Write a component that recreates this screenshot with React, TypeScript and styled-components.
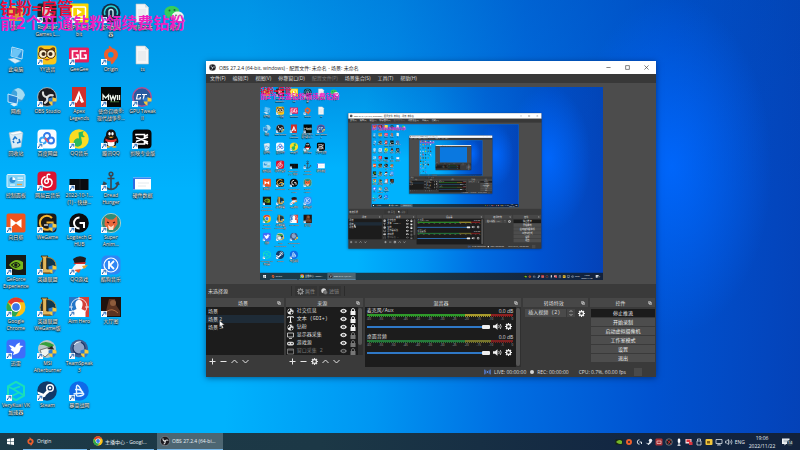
import React from "react";
import styled, { createGlobalStyle, css } from "styled-components";

const UI = '"Open Sans", "Noto Sans CJK SC", sans-serif';
const MONO = '"Liberation Mono", "Noto Sans CJK SC", monospace';
const PREVIEW_SCALE = 0.429;
const MAX_DEPTH = 3;

const GlobalStyle = createGlobalStyle`
  *, *::before, *::after { box-sizing: border-box; }
  body { margin: 0; overflow: hidden; background: #0078d7; font-family: ${UI}; }
  button, input, select { font: inherit; color: inherit; margin: 0; padding: 0; border: 0; background: none; }
  ul { list-style: none; margin: 0; padding: 0; }
  svg { display: block; flex: none; }
`;

/* ---------- desktop ---------- */

const Page = styled.div`
  display: flex;
  height: 100vh;
`;

const DesktopRoot = styled.div`
  flex: 1;
  display: flex;
  flex-direction: column;
  min-width: 0;
  overflow: hidden;
  background:
    radial-gradient(ellipse 100px 170px at 84% 37%, rgba(0, 104, 255, 0.9), rgba(0, 104, 255, 0) 100%),
    linear-gradient(180deg, rgba(0, 70, 170, 0.28), rgba(0, 70, 170, 0) 42%),
    linear-gradient(93deg, #00b2fd 0%, #00b2fd 30%, #0096f2 48%, #006ee2 64%, #0052d0 82%, #0442b8 100%);
`;

const Workspace = styled.main`
  position: relative;
  flex: 1;
  min-height: 0;
`;

const IconColumns = styled.div`
  display: grid;
  grid-template-columns: repeat(6, 1fr);
  width: 190px;
  padding-top: 1px;
`;

const Column = styled.div`
  display: grid;
  grid-auto-rows: 42px;
  align-content: start;
`;

const Shortcut = styled.button`
  display: flex;
  flex-direction: column;
  align-items: center;
  gap: 1px;
  padding-top: 2px;
  min-width: 0;
`;

const IconBox = styled.span`
  position: relative;
  display: block;
`;

const Arrow = styled.span`
  position: absolute;
  left: 0;
  bottom: 0;
`;

const Shield = styled.span`
  position: absolute;
  right: 0;
  bottom: 1px;
`;

const Caption = styled.span`
  color: #fff;
  font-size: 5px;
  line-height: 7px;
  text-align: center;
  white-space: pre;
  text-shadow: 0 0 1px #000, 0 1px 1px #000, 0 0 2px rgba(0, 0, 0, 0.7);
`;

const Banner = styled.div`
  position: absolute;
  left: 0;
  top: 0;
  padding-top: 1px;
  font-weight: 700;
  font-size: 16px;
  line-height: 15px;
  white-space: nowrap;
`;

const BannerLine = styled.div<{ $tone: string }>`
  color: ${(p) => p.$tone};
`;

const Pointer = styled.span`
  position: absolute;
  left: 219px;
  top: 320px;
`;

/* ---------- taskbar ---------- */

const Taskbar = styled.footer`
  display: flex;
  height: 17px;
  flex: none;
  align-items: stretch;
  background: linear-gradient(90deg, #1d3a47, #1c3846 40%, #122642 80%, #12223c);
  color: #e8eef2;
  font-size: 5px;
`;

const StartButton = styled.button`
  width: 20px;
  display: grid;
  place-items: center;
`;

const Tasks = styled.div`
  display: flex;
  gap: 3px;
  padding-left: 3px;
  flex: 1;
`;

const Task = styled.button<{ $active?: boolean }>`
  display: flex;
  align-items: center;
  gap: 2px;
  width: 64px;
  padding-left: 3px;
  border-bottom: 1px solid #76b9ed;
  white-space: nowrap;
  ${(p) => p.$active && css`width: 66px; background: #4d6672;`}
`;

const Tray = styled.div`
  display: flex;
  align-items: center;
  gap: 2px;
  padding-right: 7px;
`;

const TrayButton = styled.button`
  width: 8px;
  display: grid;
  place-items: center;
`;

const Clock = styled.time`
  width: 30px;
  text-align: center;
  line-height: 8px;
`;

const Notice = styled.button`
  position: relative;
  width: 11px;
  margin-left: 3px;
`;

const NoticeCount = styled.span`
  position: absolute;
  right: 0;
  bottom: 0;
  width: 6px;
  height: 6px;
  border-radius: 3px;
  background: #2b3a48;
  color: #fff;
  font-size: 4px;
  line-height: 6px;
  text-align: center;
`;

/* ---------- OBS window ---------- */

const Window = styled.section`
  position: absolute;
  inset: 61px 144px 56px 206px;
  display: flex;
  flex-direction: column;
  background: #3a3a3a;
  color: #dedede;
  font-size: 5px;
  line-height: 8px;
  box-shadow: 0 1px 6px rgba(0, 20, 60, 0.55);
`;

const TitleBar = styled.header`
  display: flex;
  align-items: center;
  height: 13px;
  flex: none;
  padding-left: 3px;
  gap: 3px;
  background: #fff;
  color: #222;
  white-space: nowrap;
`;

const Title = styled.h1`
  flex: 1;
  margin: 0;
  font-size: 5px;
  font-weight: 400;
`;

const ButtonGroup = styled.div`
  display: flex;
`;

const CaptionButton = styled.button`
  width: 19px;
  height: 13px;
  display: grid;
  place-items: center;
`;

const MenuBar = styled.nav`
  display: flex;
  height: 9px;
  flex: none;
  gap: 7px;
  padding-left: 4px;
  background: #383838;
`;

const MenuItem = styled.button`
  line-height: 9px;
  &:disabled { color: #7a7a7a; }
`;

const PreviewArea = styled.div`
  flex: 1;
  min-height: 0;
  display: grid;
  place-items: center;
  background: #4c4c4c;
`;

const PreviewFrame = styled.div`
  width: 343px;
  height: 193px;
  overflow: hidden;
  background: #0a78e0;
`;

const Stage = styled.div`
  display: flex;
  width: 800px;
  height: 450px;
  line-height: normal;
  transform: scale(${PREVIEW_SCALE});
  transform-origin: 0 0;
`;

const SourceBar = styled.div`
  display: flex;
  align-items: center;
  height: 14px;
  flex: none;
  padding-left: 2px;
`;

const SourceState = styled.span`
  width: 83px;
`;

const SourceTools = styled.div`
  display: flex;
  gap: 2px;
  padding: 0 3px;
  border: solid #2c2c2c;
  border-width: 0 1px;
`;

const ToolButton = styled.button`
  display: flex;
  align-items: center;
  gap: 1px;
  padding: 0 2px;
  height: 10px;
  background: #343434;
  &:disabled { color: #8a8a8a; }
`;

const Docks = styled.div`
  display: grid;
  grid-template-columns: 78fr 77fr 157fr 65fr 65fr;
  gap: 2px;
  height: 69px;
  flex: none;
  padding-right: 1px;
`;

const DockRoot = styled.section`
  display: flex;
  flex-direction: column;
  min-width: 0;
`;

const DockHead = styled.header`
  display: flex;
  align-items: center;
  height: 9px;
  flex: none;
  padding: 0 3px 0 3px;
  background: #474747;
`;

const DockTitle = styled.h2`
  flex: 1;
  margin: 0;
  font-size: 5px;
  font-weight: 400;
  text-align: center;
`;

const DockBody = styled.div<{ $dark?: boolean }>`
  flex: 1;
  min-height: 0;
  display: flex;
  background: ${(p) => (p.$dark ? "#1c1c1c" : "transparent")};
`;

const List = styled.ul`
  flex: 1;
  min-width: 0;
`;

const SceneRow = styled.li<{ $selected?: boolean }>`
  height: 8px;
  padding-left: 2px;
  background: ${(p) => (p.$selected ? "#1e2b37" : "transparent")};
`;

const SourceRow = styled.li<{ $dim?: boolean }>`
  display: flex;
  align-items: center;
  height: 8px;
  padding: 0 1px 0 1px;
  gap: 3px;
  white-space: nowrap;
  color: ${(p) => (p.$dim ? "#777" : "#dedede")};
`;

const SourceName = styled.span`
  flex: 1;
  font-family: ${MONO};
`;

const Toggle = styled.button<{ $dim?: boolean }>`
  width: 7px;
  color: ${(p) => (p.$dim ? "#777" : "#f2f2f2")};
`;

const ScrollTrack = styled.div`
  width: 5px;
  padding: 1px 0;
  background: #303030;
`;

const ScrollThumb = styled.div<{ $size: string }>`
  width: 4px;
  height: ${(p) => p.$size};
  border-radius: 2px;
  background: #555;
`;

const DockTools = styled.div`
  display: flex;
  align-items: center;
  height: 12px;
  flex: none;
  gap: 4px;
  padding-left: 3px;
`;

const DockTool = styled.button`
  width: 7px;
  display: grid;
  place-items: center;
`;

const Channels = styled.div`
  flex: 1;
  min-width: 0;
  display: grid;
  grid-template-columns: minmax(0, 1fr);
  grid-auto-rows: 26px;
  padding: 0 3px 0 2px;
`;

const Channel = styled.div`
  display: flex;
  flex-direction: column;
`;

const ChannelHead = styled.div`
  display: flex;
  justify-content: space-between;
  height: 7px;
  line-height: 8px;
`;

const ChannelName = styled.span`
  font-family: ${MONO};
`;

const MeterBar = styled.div<{ $loud?: boolean }>`
  height: 3px;
  background: ${(p) =>
    p.$loud
      ? "linear-gradient(90deg, #2f9a2a 67%, #a89a2c 67% 85%, #8e2020 85%)"
      : "linear-gradient(90deg, #257a3a 67%, #77752c 67% 85%, #7e2020 85%)"};
  border-bottom: 1px dotted #1c1c1c;
`;

const Scale = styled.div`
  display: flex;
  justify-content: space-between;
  height: 5px;
  line-height: 5px;
  color: #a8a8a8;
  font-size: 3px;
`;

const VolumeRow = styled.div`
  display: flex;
  align-items: center;
  gap: 3px;
  height: 9px;
  padding-right: 1px;
`;

const Volume = styled.input`
  appearance: none;
  flex: 1;
  min-width: 0;
  height: 5px;
  background: linear-gradient(#2f78c6, #2f78c6) center / 100% 2px no-repeat;
  &::-webkit-slider-thumb {
    appearance: none;
    width: 8px;
    height: 4px;
    border-radius: 1px;
    background: #efefef;
  }
`;

const IconButton = styled.button`
  display: grid;
  place-items: center;
  color: #f0f0f0;
`;

const TransitionRow = styled.div`
  flex: 1;
  display: flex;
  align-items: center;
  height: 8px;
  margin: 2px 3px 0 2px;
`;

const Transition = styled.select`
  appearance: none;
  flex: 1;
  min-width: 0;
  height: 8px;
  padding-left: 3px;
  background: #4a4a4a;
  font-family: ${MONO};
`;

const SelectArrows = styled.span`
  width: 9px;
  height: 8px;
  margin-right: 3px;
  display: grid;
  place-items: center;
  background: #464646;
  border-left: 1px solid #3a3a3a;
`;

const Controls = styled.div`
  flex: 1;
  display: grid;
  grid-auto-rows: 8px;
  gap: 1px;
  padding: 2px 0 0 1px;
  align-content: start;
`;

const ControlButton = styled.button<{ $on?: boolean }>`
  background: ${(p) => (p.$on ? "#1b1b1b" : "#4d4d4d")};
  color: #ececec;
  line-height: 8px;
`;

const StatusBar = styled.footer`
  display: flex;
  align-items: center;
  justify-content: flex-end;
  height: 10px;
  flex: none;
  padding-right: 14px;
  white-space: nowrap;
`;

const StatusItem = styled.span<{ $gap: number }>`
  display: flex;
  align-items: center;
  gap: 3px;
  margin-right: ${(p) => p.$gap}px;
`;

const Quality = styled.span`
  width: 8px;
  height: 8px;
  background: #4a4a4a;
`;

/* ---------- drawings ---------- */

const Obs = () => (
  <>
    <circle cx="10" cy="10" r="9.4" fill="#1c1b20" stroke="#c9c9c9" strokeWidth=".8" />
    <g fill="none" stroke="#ddd" strokeWidth="2.2" strokeLinecap="round">
      <path d="M6 5.4c-.4 2.6 1 4.4 3.8 4.6" />
      <path d="M15.7 8.4c-2.6-1-4.8.2-5.6 2.4" />
      <path d="M8 15.8c2.3-1.2 2.9-3.5 1.8-5.6" />
    </g>
  </>
);

const Chrome = () => (
  <>
    <circle cx="10" cy="10" r="9.5" fill="#fbc116" />
    <path d="M10 10 1.8 5.2A9.5 9.5 0 0 1 18.2 5.2H10Z" fill="#e33b2e" />
    <path d="M1.8 5.2A9.5 9.5 0 0 0 9.3 19.5L14 12.4 6 12Z" fill="#2da94f" />
    <circle cx="10" cy="10" r="4.9" fill="#fff" />
    <circle cx="10" cy="10" r="3.8" fill="#3b79e8" />
  </>
);

const Origin = () => (
  <path
    fillRule="evenodd"
    d="M8 .8C7.5 2 7.8 2.6 8.5 3.3 4.5 3.9 2.5 7 3.2 11c.6 3.3 3.3 5.4 6.6 5.3-.3 1-.1 2 .9 3.1 1.8-1.2 3-2.6 3.5-4.1 3-2.3 3.7-6.2 1.6-9.2-1.2-1.7-2.9-2.6-4.8-2.800C10.700 2 9.600 1.200 8 .8ZM9.800 7a2.800 2.800 0 1 1 0 5.600 2.800 2.800 0 0 1 0-5.600Z"
    fill="#ee5f2c"
  />
);

const Lol = () => (
  <>
    <circle cx="11" cy="10.5" r="8" fill="#12364a" stroke="#b88c3c" strokeWidth="1" />
    <path d="M4 1h7L9.700 3v11h5.800l2-2-1.200 6H4l1.600-2.200V3.200Z" fill="#e2b65c" stroke="#3f2b10" strokeWidth=".9" />
  </>
);

const Doc = () => (
  <>
    <path d="M4 1h9l3.5 3.5V19H4Z" fill="#f4f6f7" stroke="#bac3c8" strokeWidth=".6" />
    <path d="M13 1v3.500h3.500" fill="#d5dde1" />
    <path d="M6 7h8M6 9h8M6 11h8M6 13h8M6 15h8" stroke="#cdd3d6" strokeWidth=".5" />
  </>
);

const tile = (fill: string, r = 3) => <rect x=".5" y=".5" width="19" height="19" rx={r} fill={fill} />;

const GLYPHS: Record<string, React.ReactNode> = {
  obs: <Obs />,
  chrome: <Chrome />,
  origin: <Origin />,
  lol: <Lol />,
  doc: <Doc />,
  user: (
    <>
      <path d="M3 3h6l2 2h6v13H3Z" fill="#e9b84b" />
      <circle cx="10" cy="8" r="3" fill="#70502f" />
      <path d="M4 18c0-5 3-7 6-7s6 2 6 7Z" fill="#d9933a" />
    </>
  ),
  rockstar: <>{tile("#25262b", 2)}<path d="M5 4h6c4 0 4 5 1 6l4 1-3 2 1 4-3-2-3 2 1-4-3-1H5Z" fill="#d3d3d5" /></>,
  play: (
    <>
      {tile("#f8d500", 1)}
      <rect x="3.5" y="4" width="13" height="10" rx="1" fill="none" stroke="#fff" strokeWidth="1.5" />
      <path d="m8 6 5 3-5 3Z" fill="#fff" />
      <path d="M6 16.500h8" stroke="#fff" strokeWidth="1.2" />
    </>
  ),
  booster: (
    <>
      <circle cx="10" cy="10" r="9.5" fill="#152b45" />
      <path d="M4 12A6.500 6.500 0 1 1 16 12" fill="none" stroke="#2ad3d2" strokeWidth="1.5" />
      <path d="M8 14V8.500a2 2 0 0 1 4 0V14" fill="none" stroke="#c7eef3" strokeWidth="1.4" />
    </>
  ),
  wechat: (
    <>
      <path d="M8 3c-4.300 0-7.500 2.600-7.500 6 0 2 1.100 3.700 2.900 4.800L3 16l2.500-1.400c3.700.9 9.500-.9 9.900-5.600C15.500 5.500 12.300 3 8 3Z" fill="#35cc5a" />
      <path d="M13.800 8.500c3.400 0 6 2.200 6 4.800 0 1.500-.8 2.800-2 3.700l.3 1.700-1.900-1c-4.300 1-8.300-1-8.300-4.400 0-2.700 2.600-4.800 5.900-4.800Z" fill="#eef3f0" />
      <g fill="#22603b"><circle cx="5.5" cy="7.5" r="1" /><circle cx="10.5" cy="7" r="1" /><circle cx="12" cy="12.3" r=".8" /><circle cx="16" cy="12.3" r=".8" /></g>
    </>
  ),
  pc: (
    <>
      <path d="m6 2 11 3-1 9-11-3Z" fill="#2a91dc" stroke="#c8e9fb" strokeWidth=".9" />
      <path d="m6.500 3 9.500 2.600-5 7L5.800 11Z" fill="#6cc5f6" />
      <path d="m2 14 6-1 7 3-6 2.500Z" fill="#d8eef8" stroke="#6da9cc" strokeWidth=".5" />
    </>
  ),
  yy: (
    <>
      {tile("#fbc619", 4)}
      <path d="M2 3c2-2 4 0 5 1h6c1-1 3-3 5-1v6H2Z" fill="#6f4718" />
      <circle cx="6" cy="9" r="4.3" fill="#fff2cf" stroke="#4b2d10" />
      <circle cx="14" cy="9" r="4.3" fill="#fff2cf" stroke="#4b2d10" />
      <circle cx="6.5" cy="9" r="2" fill="#3f2a17" /><circle cx="13.5" cy="9" r="2" fill="#3f2a17" />
      <path d="M7 14q3 3 6 0Z" fill="#c45724" />
    </>
  ),
  geegee: (
    <>
      <rect x="0" y="2.5" width="20" height="15" rx="1.5" fill="#e7215c" />
      <path d="M9 6H3.500v7.500H9V10H6.800M17 6h-5.500v7.500H17V10h-2.200" fill="none" stroke="#fff" strokeWidth="1.7" />
    </>
  ),
  network: (
    <>
      <circle cx="12" cy="8" r="7" fill="#3fa3dc" />
      <path d="M8 3q4 1 3 5t5 5l3-5q-2-6-7-7Z" fill="#a5dcf2" />
      <path d="m2 7 10 3-1 7-9-2Z" fill="#2284d5" stroke="#d3effd" strokeWidth=".9" />
      <path d="m4 17 4-1 4 2-4 1.500Z" fill="#d8eef8" />
    </>
  ),
  apex: <><rect x="3" y="0" width="14" height="20" fill="#d02f2b" /><path d="M10 3.500 15 15l-2.500 1L10 12l-2.500 4L5 15Z" fill="#fff" /><path d="M10 8v5l1.500-1Z" fill="#d02f2b" /></>,
  mw: <><rect width="20" height="20" fill="#050807" /><path d="M2 13V8l2.700 3L7.500 8v5M9 8l1.300 5L12 9l1.500 4L15 8M16.500 8v5M18.500 8v5" fill="none" stroke="#eef5ec" strokeWidth="1.3" /><path d="M9 14.800h9" stroke="#65b14b" strokeWidth=".6" /></>,
  gpu: <><circle cx="10" cy="10" r="9.2" fill="#29599f" stroke="#b05291" strokeWidth="1.5" /><path d="M9 7.500H5.500L4.500 12H8l.5-2M10 7.500h5M12.300 7.500 11.200 12.500" fill="none" stroke="#fff" strokeWidth="1.2" /></>,
  bin: (
    <>
      <path d="M3 4 14 2l3 2-2 14-9 1.500Z" fill="#dcecf5" stroke="#8ab0c7" strokeWidth=".6" />
      <path d="m3 4 11-2 3 2-10 2Z" fill="#fafdff" stroke="#9dbfce" strokeWidth=".5" />
      <path d="m7 11 2-3 2 2M13 10l1 3-3 1M8 14l-1-2" fill="none" stroke="#1c78cf" strokeWidth="1.5" />
    </>
  ),
  baidu: (
    <>
      {tile("#fafcff", 4)}
      <g fill="none" strokeWidth="1.9"><circle cx="10" cy="7" r="3" stroke="#3179e9" /><circle cx="6" cy="11.5" r="3" stroke="#37a7f5" /><circle cx="14" cy="11.5" r="3" stroke="#3179e9" /></g>
      <path d="m8 9 3 4" stroke="#ee4e67" strokeWidth="1.8" />
    </>
  ),
  qqmusic: <><circle cx="10" cy="10" r="9.8" fill="#fbdc24" /><path d="M9.500 3.500 15 2q-3 3 1 6-3 .5-4-.5l1 6a4.200 4.200 0 1 1-3-4Z" fill="#2ab95b" /></>,
  qq: (
    <>
      <path d="M10 .5c3.500 0 5 2.500 5 6 2 2.500 3 5.500 2 7.500-.5.6-1-.2-1.500-1 0 2-1 3.500-2 4.500H6.500c-1-1-2-2.500-2-4.500-.5.800-1 1.600-1.500 1-1-2 0-5 2-7.500 0-3.500 1.500-6 5-6Z" fill="#131314" />
      <path d="M6.500 11h7v5q-3.500 3-7 0Z" fill="#fff" />
      <path d="M4.500 9.500q5.500 3 11 0v2.500q-5.500 2.500-11 0Z" fill="#e1302c" />
      <ellipse cx="8.5" cy="4.8" rx="1.2" ry="1.7" fill="#fff" /><ellipse cx="11.5" cy="4.8" rx="1.2" ry="1.7" fill="#fff" />
      <path d="M7 7.800h6l-3 1.500Z" fill="#f6ab25" />
      <path d="M4 18q3-2 5.500 0-2 1.500-5.500 0M10.500 18q3-2 5.500 0-3 1.500-5.500 0" fill="#f6ab25" />
    </>
  ),
  jianying: <>{tile("#050505", 4)}<path d="M4 6.500V5.500h8.500v2l3.500-2M4 8.500l12 4.500M16 8l-12 4.500M4 13.500v1.500h8.500v-2l3.500 2" fill="none" stroke="#fff" strokeWidth="1.6" /></>,
  panel: (
    <>
      <rect x="1" y="3.5" width="18" height="13" rx="1" fill="#7fd2f7" stroke="#e0f5fe" />
      <circle cx="6.5" cy="9" r="3" fill="#2f8fd6" /><path d="M6.500 9V6a3 3 0 0 1 3 3Z" fill="#fff" />
      <path d="M11.500 7H17M11.500 9.500H17M4 14h5" stroke="#f5fbfd" strokeWidth="1.2" /><path d="M11 13.500h5" stroke="#f5a13a" strokeWidth="1.3" />
    </>
  ),
  netease: <>{tile("#dc1430", 4)}<path d="M12.800 3.500c-2.500-1-3.200.8-2.500 3l1 3.500c.6 2.800-3.600 3.200-3.600.4C7.700 7 14 6.500 15 10.500c.8 4-2.500 6-5.500 5.700C3.500 15.500 3 8 8 5.800" fill="none" stroke="#fff" strokeWidth="1.5" strokeLinecap="round" /></>,
  clip: <><rect x=".5" y="8" width="19" height="11" fill="#0b0d10" /><path d="M11 8v11" stroke="#333" strokeWidth=".6" /></>,
  anchor: <g fill="none" stroke="#3a4650" strokeWidth="1.6"><circle cx="10" cy="3" r="1.8" /><path d="M10 5v13M6.500 7.500h7M3 12q1 6 7 6.500 6-.5 7-6.500M2 14l1-2.500L5.500 13M18 14l-1-2.500-2.500 1.500" /></g>,
  shot: <><rect x="1" y="6.5" width="18" height="12" fill="#fff" /><path d="M1 6.500h18v1.500H1Z" fill="#3b7ff0" /><path d="M1 8h2v10.500H1Z" fill="#2f6be0" /><path d="M6 12h11M6 15h8" stroke="#dde4ea" strokeWidth=".8" /></>,
  sunflower: <>{tile("#f0541e", 2)}<path d="m4.500 5.500 5.500 4 5.500-3.500v9L10 10.500l-5.500 4Z" fill="#fff" /></>,
  wegame: <>{tile("#1d1b19", 4)}<path d="M15 5A7 7 0 1 0 15.500 14V9.500H9.500" fill="none" stroke="#f6b52f" strokeWidth="2.1" /><path d="M7 12h4" stroke="#fff" strokeWidth="1.2" /></>,
  logitech: <><circle cx="10" cy="10" r="9.8" fill="#0b0c0e" /><path d="M10.500 4.500a5.500 5.500 0 1 0 0 11M10.500 10H15v5" fill="none" stroke="#fff" strokeWidth="2" /></>,
  fox: (
    <>
      <circle cx="10" cy="10" r="9.6" fill="#2e8c77" stroke="#cdd9c8" strokeWidth=".8" />
      <path d="m4 4 4 2.500h4L16 3l.5 8L12 17H8l-4.500-5Z" fill="#e8673c" />
      <path d="m7 12 3 2 3-2-1 5H8Z" fill="#fbe3cc" /><path d="m6 9 2 1M14 9l-2 1" stroke="#311" strokeWidth="1.2" />
    </>
  ),
  nvidia: <><rect width="20" height="20" fill="#161b18" /><path d="M3 10q6-8 14-3v7q-8 3-14-4Z" fill="#75b71e" /><path d="M5.500 10q5-5 8.500 0-4 5-8.500 0Z" fill="none" stroke="#161b18" strokeWidth="1.1" /><circle cx="9.8" cy="10" r="1.7" fill="#161b18" /></>,
  qqgame: (
    <>
      <path d="M3 14q4-8 12-7l2 5-6 3-6 4Z" fill="#f5f5f5" />
      <path d="M4 4Q10-1 17 3l-1 5-10 1Z" fill="#211b1c" /><path d="m4 8 13-1-1 2H6Z" fill="#d22c22" />
      <path d="m13 11 6-1-4 4Z" fill="#f39b1e" /><path d="m5 15 7-1-2 4Z" fill="#e4572a" />
    </>
  ),
  kugou: <>{tile("#2f86f4", 5)}<circle cx="10" cy="10" r="7" fill="none" stroke="#fff" strokeWidth="1.2" /><path d="M8 6v8M13 6l-4 4 4 4" fill="none" stroke="#fff" strokeWidth="1.8" /></>,
  aim: (
    <>
      <path d="M0 0h10v20H0Z" fill="#2377c8" /><path d="M10 0h10v20H10Z" fill="#d4423a" />
      <circle cx="10" cy="9.5" r="8" fill="none" stroke="#fff" strokeWidth=".8" /><path d="M10 0v4M0 10h4M16 10h4" stroke="#fff" strokeWidth=".8" />
      <path d="M10 3c3 0 4 2.500 3.500 5.500L12.500 12l4 2v6h-13v-6l4-2-1-3.500C6 5.500 7 3 10 3Z" fill="#fff" />
    </>
  ),
  portrait: <><rect width="20" height="20" fill="#20130f" /><path d="M8 2h6l1 6 4 6v5H4l2-9Z" fill="#5c3422" /><circle cx="12" cy="6" r="3" fill="#8e5c3c" /><path d="M5 15q6-5 12 1" stroke="#b06c40" fill="none" /></>,
  xunlei: <>{tile("#3f6dfa", 4)}<path d="M3 6q4 .5 6 2.500 1-4 5-5l-.5 3 4 .5-3 2q-.5 5-4.500 6L7 16l1-3q-3-1-3.500-3l1.500-.5Q4 8.500 3 6Z" fill="#fff" /></>,
  msi: (
    <>
      <circle cx="10" cy="10" r="9" fill="#b9c7c6" /><path d="M2 6q6-6 15 0l-3 4q-6-5-12-4Z" fill="#36a03b" />
      <path d="m3 11 10-3 4 2-9 8q-4-2-5-7Z" fill="#eff3ef" stroke="#333" strokeWidth=".6" /><path d="m10 10 5-3 2 4Z" fill="#222" />
    </>
  ),
  teamspeak: <><circle cx="10" cy="9.5" r="9" fill="#3e5f92" /><circle cx="10" cy="9" r="6" fill="#8fa5c8" stroke="#1d3765" strokeWidth="1.2" /><path d="M5 6q3-4 7-3" fill="none" stroke="#dfe9f5" strokeWidth="1.2" /></>,
  verykuai: <><path d="m10 .8 8 4.500v9.300L10 19.200l-8-4.600V5.300Z" fill="none" stroke="#18dfba" strokeWidth="2" /><path d="M14 5.500 7 8l6 3.500L6 15M2 5.500l5 2.500M18 14.500l-5-3" fill="none" stroke="#18dfba" strokeWidth="1.8" /></>,
  steam: (
    <>
      <circle cx="10" cy="10" r="9.8" fill="#123a68" />
      <circle cx="13" cy="7" r="3.3" fill="none" stroke="#fff" strokeWidth="1.5" /><circle cx="13" cy="7" r="1.3" fill="#fff" />
      <path d="m.5 10.500 6 2.300L10 9l2.500 2L9 14a2.800 2.800 0 0 1-5.500 0L1 13Z" fill="#fff" />
    </>
  ),
  battlenet: <><circle cx="10" cy="10" r="9.8" fill="#0f6be8" /><path d="M7.500 15V5.500q.5-2.500 2.500 0l4 6.500M4.500 13l8.500-1q3 .5 1 2-3 1.500-6.500 1M6 8.500q5-1 8 3" fill="none" stroke="#e6f6ff" strokeWidth="1.4" /></>,
};

const Glyph = ({ name, size = 20 }: { name: string; size?: number }) => (
  <svg width={size} height={size} viewBox="0 0 20 20" aria-hidden="true">{GLYPHS[name]}</svg>
);

const ArrowBadge = () => (
  <svg width="6" height="6" viewBox="0 0 6 6" aria-hidden="true">
    <rect width="6" height="6" fill="#f6f9fb" />
    <path d="M1.300 5Q1.500 2.800 3.500 2.500M2.500 1.300h2.300v2.300" fill="none" stroke="#1b62b5" strokeWidth="1" />
  </svg>
);

const ShieldBadge = () => (
  <svg width="9" height="9" viewBox="0 0 9 9" aria-hidden="true">
    <path d="M4.500.3 8.500 1.500q.3 5-4 7.200Q.2 6.500.5 1.500Z" fill="#2b7bd2" />
    <path d="M4.500.3 8.500 1.500V4.500h-4ZM.5 4.500h4v4.200Q1 7 .5 4.500Z" fill="#f8c93a" />
  </svg>
);

const Gear = ({ size = 7 }: { size?: number }) => (
  <svg width={size} height={size} viewBox="0 0 14 14" aria-hidden="true">
    <circle cx="7" cy="7" r="4" fill="none" stroke="currentColor" strokeWidth="2.6" />
    <path d="M7 0v2.500M7 11.500V14M0 7h2.500M11.500 7H14M2 2l2 2M10 10l2 2M12 2l-2 2M4 10l-2 2" stroke="currentColor" strokeWidth="2.4" />
  </svg>
);

const Speaker = () => (
  <svg width="9" height="7" viewBox="0 0 18 14" aria-hidden="true">
    <path d="M0 4.500h4L9 .5v13l-5-4H0Z" fill="currentColor" />
    <path d="M11.500 4q2 3 0 6M14.500 2q3.500 5 0 10" fill="none" stroke="currentColor" strokeWidth="1.6" />
  </svg>
);

const Eye = () => (
  <svg width="7" height="6" viewBox="0 0 14 12" aria-hidden="true">
    <path d="M0 6q7-9 14 0-7 9-14 0Z" fill="currentColor" />
    <circle cx="7" cy="6" r="2.6" fill="#1c1c1c" /><circle cx="7" cy="6" r="1" fill="currentColor" />
  </svg>
);

const Lock = () => (
  <svg width="6" height="7" viewBox="0 0 12 14" aria-hidden="true">
    <rect x="1" y="6" width="10" height="8" fill="currentColor" />
    <path d="M3 6V4a3 3 0 0 1 6 0v2" fill="none" stroke="currentColor" strokeWidth="1.8" />
  </svg>
);

const PopOut = () => (
  <svg width="4" height="4" viewBox="0 0 8 8" aria-hidden="true">
    <path d="M1 1h4v4H1ZM3 3h4v4H3Z" fill="none" stroke="#ccc" strokeWidth="1.2" />
  </svg>
);

const TOOL_PATHS: Record<string, string> = {
  add: "M7 1v12M1 7h12",
  remove: "M1 7h12",
  up: "m1 10 6-6 6 6",
  down: "m1 4 6 6 6-6",
};

const ToolGlyph = ({ name }: { name: string }) =>
  name === "gear" ? <Gear /> : (
    <svg width="7" height="7" viewBox="0 0 14 14" aria-hidden="true">
      <path d={TOOL_PATHS[name]} fill="none" stroke="#e6e6e6" strokeWidth="2" />
    </svg>
  );

const SourceGlyph = ({ kind }: { kind: string }) => (
  <svg width="7" height="7" viewBox="0 0 14 14" aria-hidden="true">
    {kind === "globe" && <><circle cx="7" cy="7" r="6" fill="#f2f2f2" /><path d="m5 1 2 4-4 3-2-1M8 7l4 1-3 5-2-3ZM10 1 9 4l4 1" fill="#1c1c1c" /></>}
    {kind === "text" && <path d="M1.500 4V1.500h11V4M7 2v10.500M4.500 12.500h5" fill="none" stroke="#f2f2f2" strokeWidth="2" />}
    {kind === "monitor" && <path d="M1 2h12v8H1ZM4 13h6" fill="none" stroke="#ddd" strokeWidth="1.6" />}
    {kind === "game" && <><rect x="0" y="3.5" width="14" height="7.5" rx="3.5" fill="#ddd" /><circle cx="4" cy="7" r="1.5" fill="#1c1c1c" /><circle cx="10" cy="7" r="1.5" fill="#1c1c1c" /></>}
    {kind === "window" && <path d="M1 2h12v10H1ZM1 4h12" fill="none" stroke="#888" strokeWidth="1.6" />}
  </svg>
);

/* ---------- data ---------- */

type Item = { icon: string; label: string; link?: boolean; shield?: boolean };

const COLUMNS: Item[][] = [
  [
    { icon: "user", label: "用户" },
    { icon: "pc", label: "此电脑" },
    { icon: "network", label: "网络" },
    { icon: "bin", label: "回收站" },
    { icon: "panel", label: "控制面板" },
    { icon: "sunflower", label: "向日葵", link: true },
    { icon: "nvidia", label: "GeForce\nExperience", link: true },
    { icon: "chrome", label: "Google\nChrome", link: true },
    { icon: "xunlei", label: "迅雷", link: true },
    { icon: "verykuai", label: "VeryKuai VK\n加速器", link: true },
  ],
  [
    { icon: "rockstar", label: "Rockstar\nGames L...", link: true },
    { icon: "yy", label: "YY语音", link: true },
    { icon: "obs", label: "OBS Studio", link: true, shield: true },
    { icon: "baidu", label: "百度网盘", link: true },
    { icon: "netease", label: "网易云音乐", link: true },
    { icon: "wegame", label: "WeGame", link: true, shield: true },
    { icon: "lol", label: "英雄联盟", link: true, shield: true },
    { icon: "lol", label: "英雄联盟\nWeGame版", link: true, shield: true },
    { icon: "msi", label: "MSI\nAfterburner", link: true, shield: true },
    { icon: "steam", label: "Steam", link: true },
  ],
  [
    { icon: "play", label: "PotPlayer 64\nbit", link: true },
    { icon: "geegee", label: "GeeGee", link: true },
    { icon: "apex", label: "Apex\nLegends", link: true },
    { icon: "qqmusic", label: "QQ音乐", link: true },
    { icon: "clip", label: "2022-10-1...\n(1) - 快捷...", link: true },
    { icon: "logitech", label: "Logitech G\nHUB", link: true },
    { icon: "qqgame", label: "QQ游戏", link: true },
    { icon: "aim", label: "Aim Hero", link: true },
    { icon: "teamspeak", label: "TeamSpeak\n3", link: true, shield: true },
    { icon: "battlenet", label: "暴雪战网", link: true },
  ],
  [
    { icon: "booster", label: "雷神加速\n器", link: true },
    { icon: "origin", label: "Origin", link: true },
    { icon: "mw", label: "使命召唤®:\n现代战争®...", link: true },
    { icon: "qq", label: "腾讯QQ", link: true },
    { icon: "anchor", label: "Dread\nHunger", link: true },
    { icon: "fox", label: "Super\nAnim...", link: true },
    { icon: "kugou", label: "酷狗音乐", link: true },
    { icon: "portrait", label: "大厅图", link: true },
  ],
  [
    { icon: "doc", label: "新建文本" },
    { icon: "doc", label: "ts" },
    { icon: "gpu", label: "GPU Tweak\nII", link: true, shield: true },
    { icon: "jianying", label: "剪映专业版", link: true },
    { icon: "shot", label: "硬件数据" },
  ],
  [{ icon: "wechat", label: "微信" }],
];

const MENUS = ["文件(F)", "编辑(E)", "视图(V)", "停靠窗口(D)", "配置文件(P)", "场景集合(S)", "工具(T)", "帮助(H)"];
const SCENES = ["场景", "场景 2", "场景 3"];
const SOURCES = [
  { kind: "globe", name: "社交信息", locked: true },
  { kind: "text", name: "文本 (GDI+)", locked: true },
  { kind: "globe", name: "钻粉", locked: true },
  { kind: "monitor", name: "显示器采集", locked: false },
  { kind: "game", name: "游戏源", locked: false },
  { kind: "window", name: "窗口采集 2", locked: false, hidden: true },
];
const CONTROLS = ["停止推流", "开始录制", "启动虚拟摄像机", "工作室模式", "设置", "退出"];
const TICKS = [-60, -55, -50, -45, -40, -35, -30, -25, -20, -15, -10, -5, 0];

const TRAY: { name: string; art: React.ReactNode }[] = [
  { name: "NVIDIA", art: <><rect x="1" y="3" width="14" height="10" fill="#17250f" /><path d="M2 8q6-7 12-2v5q-6 3-12-3Z" fill="#76b82a" /></> },
  { name: "Origin", art: <circle cx="8" cy="8" r="4" fill="none" stroke="#ee5f2c" strokeWidth="4" /> },
  { name: "Logitech G HUB", art: <path d="M9 3.500a4.500 4.500 0 1 0 0 9M9 8h4v4" fill="none" stroke="#dfe5e8" strokeWidth="2" /> },
  { name: "Steam", art: <><circle cx="11" cy="5" r="3.5" fill="#e8eef5" /><path d="m1 9 5 2 5-5 2 3-6 5Z" fill="#e8eef5" /></> },
  { name: "GeeGee", art: <><rect x="1" y="1" width="14" height="14" rx="2" fill="#a93238" /><path d="M4 6h8v5H4Z" fill="none" stroke="#e9c3be" strokeWidth="1.5" /></> },
  { name: "OBS", art: <><circle cx="8" cy="8" r="6.5" fill="#1a1a1e" stroke="#c8c8c8" /><path d="m4 4 8 8M11 4l-5 8" stroke="#c33" strokeWidth="1.5" /></> },
  { name: "麦克风", art: <><rect x="5.5" y="1" width="5" height="9" rx="2.5" fill="#fff" /><path d="M8 10v4M5 14.500h6" stroke="#fff" strokeWidth="2" /></> },
  { name: "QQ", art: <><rect x="1" y="2" width="12" height="9" fill="#f3dadd" /><path d="M3 3h8v5H3ZM8 8h7v6H8Z" fill="#d8343d" /></> },
  { name: "USB", art: <path d="M5 6V2h6v4M4 6h8v8H4Z" fill="none" stroke="#d9e0e6" strokeWidth="1.5" /> },
  { name: "加速器", art: <><rect x="1" y="2" width="14" height="12" rx="2" fill="#f3c63b" /><path d="M4 6h6v5H4Z" fill="#7b5c16" /></> },
  { name: "网络", art: <path d="M2 3h12v8H2ZM8 11v3M4 14h8" fill="none" stroke="#e4eaee" strokeWidth="1.5" /> },
  { name: "音量", art: <path d="M1 6h2l4-3v10l-4-3H1ZM9.500 5q2 3 0 6M12.500 3q3 5 0 10" fill="none" stroke="#e4eaee" strokeWidth="1.4" /> },
];

const WINDOW_ACTIONS = [
  { label: "最小化", d: "M1 6h10" },
  { label: "最大化", d: "M1.500 1.500h9v9h-9Z" },
  { label: "关闭", d: "m1 1 10 10M11 1 1 11" },
];

/* ---------- components ---------- */

const DesktopIcon = ({ item }: { item: Item }) => (
  <Shortcut type="button">
    <IconBox>
      <Glyph name={item.icon} />
      {item.link && <Arrow><ArrowBadge /></Arrow>}
      {item.shield && <Shield><ShieldBadge /></Shield>}
    </IconBox>
    <Caption>{item.label}</Caption>
  </Shortcut>
);

const WindowButtons = () => (
  <ButtonGroup>
    {WINDOW_ACTIONS.map(({ label, d }) => (
      <CaptionButton key={label} type="button" aria-label={label}>
        <svg width="5" height="5" viewBox="0 0 12 12" aria-hidden="true"><path d={d} fill="none" stroke="#444" strokeWidth="1.6" /></svg>
      </CaptionButton>
    ))}
  </ButtonGroup>
);

const Dock = ({ title, children }: { title: string; children: React.ReactNode }) => (
  <DockRoot>
    <DockHead>
      <DockTitle>{title}</DockTitle>
      <IconButton type="button" aria-label={`浮动${title}`}><PopOut /></IconButton>
    </DockHead>
    {children}
  </DockRoot>
);

const ToolRow = ({ names }: { names: string[] }) => (
  <DockTools>
    {names.map((n) => <DockTool key={n} type="button" aria-label={n}><ToolGlyph name={n} /></DockTool>)}
  </DockTools>
);

const MixerChannel = ({ name, loud }: { name: string; loud?: boolean }) => (
  <Channel>
    <ChannelHead><ChannelName>{name}</ChannelName><output>0.0 dB</output></ChannelHead>
    <MeterBar $loud={loud} />
    <Scale>{TICKS.map((t) => <span key={t}>{t}</span>)}</Scale>
    <VolumeRow>
      <Volume type="range" min={0} max={100} defaultValue={100} aria-label={name} />
      <IconButton type="button" aria-label="静音"><Speaker /></IconButton>
      <IconButton type="button" aria-label="音频设置"><Gear /></IconButton>
    </VolumeRow>
  </Channel>
);

const ObsWindow = ({ depth }: { depth: number }) => (
  <Window aria-label="OBS">
    <TitleBar>
      <Glyph name="obs" size={7} />
      <Title>OBS 27.2.4 (64-bit, windows) - 配置文件: 未命名 - 场景: 未命名</Title>
      <WindowButtons />
    </TitleBar>
    <MenuBar>
      {MENUS.map((m, i) => <MenuItem key={m} type="button" disabled={i === 4}>{m}</MenuItem>)}
    </MenuBar>
    <PreviewArea>
      <PreviewFrame aria-hidden="true" inert>
        {depth < MAX_DEPTH && <Stage><Desktop depth={depth + 1} /></Stage>}
      </PreviewFrame>
    </PreviewArea>
    <SourceBar>
      <SourceState>未选择源</SourceState>
      <SourceTools>
        <ToolButton type="button" disabled><Gear />属性</ToolButton>
        <ToolButton type="button" disabled>
          <svg width="7" height="7" viewBox="0 0 14 14" aria-hidden="true">
            <circle cx="5.5" cy="5.5" r="5" fill="#d5d5d5" /><circle cx="9" cy="9" r="4.2" fill="#777" stroke="#343434" />
          </svg>
          滤镜
        </ToolButton>
      </SourceTools>
    </SourceBar>
    <Docks>
      <Dock title="场景">
        <DockBody $dark>
          <List>{SCENES.map((s, i) => <SceneRow key={s} $selected={i === 1}>{s}</SceneRow>)}</List>
        </DockBody>
        <ToolRow names={["add", "remove", "up", "down"]} />
      </Dock>
      <Dock title="来源">
        <DockBody $dark>
          <List>
            {SOURCES.map((s) => (
              <SourceRow key={s.name} $dim={s.hidden}>
                <SourceGlyph kind={s.kind} />
                <SourceName>{s.name}</SourceName>
                <Toggle type="button" aria-label="显示" $dim={s.hidden}><Eye /></Toggle>
                <Toggle type="button" aria-label="锁定" $dim={!s.locked}><Lock /></Toggle>
              </SourceRow>
            ))}
          </List>
          <ScrollTrack><ScrollThumb $size="80%" /></ScrollTrack>
        </DockBody>
        <ToolRow names={["add", "remove", "gear", "up", "down"]} />
      </Dock>
      <Dock title="混音器">
        <DockBody $dark>
          <Channels>
            <MixerChannel name="麦克风/Aux" loud />
            <MixerChannel name="桌面音频" />
          </Channels>
          <ScrollTrack><ScrollThumb $size="100%" /></ScrollTrack>
        </DockBody>
      </Dock>
      <Dock title="转场特效">
        <DockBody>
          <TransitionRow>
            <Transition aria-label="转场特效"><option>插入视频 (2)</option></Transition>
            <SelectArrows>
              <svg width="4" height="6" viewBox="0 0 8 12" aria-hidden="true"><path d="m1 4 3-3 3 3M1 8l3 3 3-3" fill="none" stroke="#ccc" strokeWidth="1.4" /></svg>
            </SelectArrows>
            <IconButton type="button" aria-label="转场设置"><Gear /></IconButton>
          </TransitionRow>
        </DockBody>
      </Dock>
      <Dock title="控件">
        <Controls>
          {CONTROLS.map((c, i) => <ControlButton key={c} type="button" $on={i === 0}>{c}</ControlButton>)}
        </Controls>
      </Dock>
    </Docks>
    <StatusBar>
      <StatusItem $gap={4}>
        <svg width="7" height="6" viewBox="0 0 14 12" aria-hidden="true">
          <circle cx="7" cy="6" r="2" fill="#5b8df0" /><path d="M4 2q-3 4 0 8M10 2q3 4 0 8M1.500 1q-2 5 0 10M12.500 1q2 5 0 10" fill="none" stroke="#5b8df0" strokeWidth="1.4" />
        </svg>
        LIVE: 00:00:00
      </StatusItem>
      <StatusItem $gap={10}>
        <svg width="4" height="4" viewBox="0 0 4 4" aria-hidden="true"><circle cx="2" cy="2" r="2" fill="#d5d5d5" /></svg>
        REC: 00:00:00
      </StatusItem>
      <StatusItem $gap={8}>CPU: 0.7%, 60.00 fps</StatusItem>
      <Quality />
    </StatusBar>
  </Window>
);

const Desktop = ({ depth }: { depth: number }) => (
  <DesktopRoot>
    <Workspace>
      <IconColumns>
        {COLUMNS.map((col, i) => (
          <Column key={i}>{col.map((item, j) => <DesktopIcon key={j} item={item} />)}</Column>
        ))}
      </IconColumns>
      <Banner>
        <BannerLine $tone="#e8103c">钻粉=房管</BannerLine>
        <BannerLine $tone="#ee1fc0">前2个开通钻粉领续费钻粉</BannerLine>
      </Banner>
      <ObsWindow depth={depth} />
      <Pointer>
        <svg width="6" height="9" viewBox="0 0 12 18" aria-hidden="true"><path d="M1 1v13l3-3 2.500 6 2.500-1-2.500-6H11Z" fill="#fff" stroke="#222" strokeWidth=".8" /></svg>
      </Pointer>
    </Workspace>
    <Taskbar>
      <StartButton type="button" aria-label="开始">
        <svg width="7" height="7" viewBox="0 0 14 14" aria-hidden="true"><path d="M0 2l6-1v5.500H0ZM7 .8 14 0v6.500H7ZM0 7.500h6V13l-6-1ZM7 7.500h7V14l-7-.8Z" fill="#fff" /></svg>
      </StartButton>
      <Tasks>
        <Task type="button"><Glyph name="origin" size={9} />Origin</Task>
        <Task type="button"><Glyph name="chrome" size={10} />主播中心 - Googl...</Task>
        <Task type="button" $active><Glyph name="obs" size={10} />OBS 27.2.4 (64-bi...</Task>
      </Tasks>
      <Tray>
        {TRAY.map((t) => (
          <TrayButton key={t.name} type="button" aria-label={t.name}>
            <svg width="8" height="8" viewBox="0 0 16 16" aria-hidden="true">{t.art}</svg>
          </TrayButton>
        ))}
        <span>ENG</span>
        <Clock>19:06<br />2022/11/22</Clock>
        <Notice type="button" aria-label="通知">
          <svg width="8" height="8" viewBox="0 0 16 16" aria-hidden="true"><path d="M0 1h15v11H8l-3 3v-3H0Z" fill="#f0f3f5" /><path d="M3 4.500h9M3 7.500h9" stroke="#6d7f8c" /></svg>
          <NoticeCount>14</NoticeCount>
        </Notice>
      </Tray>
    </Taskbar>
  </DesktopRoot>
);

export default function App() {
  return (
    <Page>
      <GlobalStyle />
      <Desktop depth={0} />
    </Page>
  );
}
